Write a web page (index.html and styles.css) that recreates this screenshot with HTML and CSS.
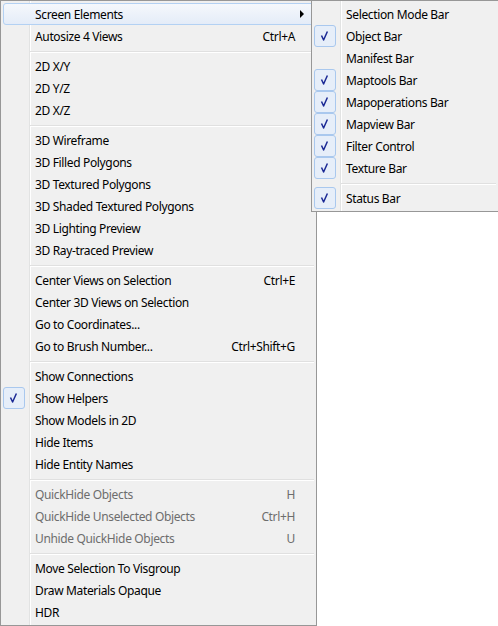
FILE: index.html
```html
<!DOCTYPE html>
<html lang="en">
<head>
    <meta charset="UTF-8">
    <meta name="viewport" content="width=device-width, initial-scale=1.0">
    <title>View Menu</title>
    <link rel="stylesheet" href="styles.css">
</head>
<body>
    <div class="menus">
        <ul class="menu main">
            <li class="item hot"><span class="mark"></span><span class="label">Screen Elements</span><span class="arrow"></span></li>
            <li class="item"><span class="mark"></span><span class="label">Autosize 4 Views</span><span class="key">Ctrl+A</span></li>
            <li class="sep"></li>
            <li class="item"><span class="mark"></span><span class="label">2D X/Y</span></li>
            <li class="item"><span class="mark"></span><span class="label">2D Y/Z</span></li>
            <li class="item"><span class="mark"></span><span class="label">2D X/Z</span></li>
            <li class="sep"></li>
            <li class="item"><span class="mark"></span><span class="label">3D Wireframe</span></li>
            <li class="item"><span class="mark"></span><span class="label">3D Filled Polygons</span></li>
            <li class="item"><span class="mark"></span><span class="label">3D Textured Polygons</span></li>
            <li class="item"><span class="mark"></span><span class="label">3D Shaded Textured Polygons</span></li>
            <li class="item"><span class="mark"></span><span class="label">3D Lighting Preview</span></li>
            <li class="item"><span class="mark"></span><span class="label">3D Ray-traced Preview</span></li>
            <li class="sep"></li>
            <li class="item"><span class="mark"></span><span class="label">Center Views on Selection</span><span class="key">Ctrl+E</span></li>
            <li class="item"><span class="mark"></span><span class="label">Center 3D Views on Selection</span></li>
            <li class="item"><span class="mark"></span><span class="label">Go to Coordinates...</span></li>
            <li class="item"><span class="mark"></span><span class="label">Go to Brush Number...</span><span class="key">Ctrl+Shift+G</span></li>
            <li class="sep"></li>
            <li class="item"><span class="mark"></span><span class="label">Show Connections</span></li>
            <li class="item"><span class="mark on"><svg viewBox="0 0 20 20"><path d="M6.5 9.5 L8.6 14 L12.4 5.5"/></svg></span><span class="label">Show Helpers</span></li>
            <li class="item"><span class="mark"></span><span class="label">Show Models in 2D</span></li>
            <li class="item"><span class="mark"></span><span class="label">Hide Items</span></li>
            <li class="item"><span class="mark"></span><span class="label">Hide Entity Names</span></li>
            <li class="sep"></li>
            <li class="item off"><span class="mark"></span><span class="label">QuickHide Objects</span><span class="key">H</span></li>
            <li class="item off"><span class="mark"></span><span class="label">QuickHide Unselected Objects</span><span class="key">Ctrl+H</span></li>
            <li class="item off"><span class="mark"></span><span class="label">Unhide QuickHide Objects</span><span class="key">U</span></li>
            <li class="sep"></li>
            <li class="item"><span class="mark"></span><span class="label">Move Selection To Visgroup</span></li>
            <li class="item"><span class="mark"></span><span class="label">Draw Materials Opaque</span></li>
            <li class="item"><span class="mark"></span><span class="label">HDR</span></li>
        </ul>

        <ul class="menu sub">
            <li class="item"><span class="mark"></span><span class="label">Selection Mode Bar</span></li>
            <li class="item"><span class="mark on"><svg viewBox="0 0 20 20"><path d="M6.5 9.5 L8.6 14 L12.4 5.5"/></svg></span><span class="label">Object Bar</span></li>
            <li class="item"><span class="mark"></span><span class="label">Manifest Bar</span></li>
            <li class="item"><span class="mark on"><svg viewBox="0 0 20 20"><path d="M6.5 9.5 L8.6 14 L12.4 5.5"/></svg></span><span class="label">Maptools Bar</span></li>
            <li class="item"><span class="mark on"><svg viewBox="0 0 20 20"><path d="M6.5 9.5 L8.6 14 L12.4 5.5"/></svg></span><span class="label">Mapoperations Bar</span></li>
            <li class="item"><span class="mark on"><svg viewBox="0 0 20 20"><path d="M6.5 9.5 L8.6 14 L12.4 5.5"/></svg></span><span class="label">Mapview Bar</span></li>
            <li class="item"><span class="mark on"><svg viewBox="0 0 20 20"><path d="M6.5 9.5 L8.6 14 L12.4 5.5"/></svg></span><span class="label">Filter Control</span></li>
            <li class="item"><span class="mark on"><svg viewBox="0 0 20 20"><path d="M6.5 9.5 L8.6 14 L12.4 5.5"/></svg></span><span class="label">Texture Bar</span></li>
            <li class="sep"></li>
            <li class="item"><span class="mark on"><svg viewBox="0 0 20 20"><path d="M6.5 9.5 L8.6 14 L12.4 5.5"/></svg></span><span class="label">Status Bar</span></li>
        </ul>
    </div>
</body>
</html>
```

FILE: styles.css
```css
html, body {
    margin: 0;
    height: 100%;
    overflow: hidden;
    background-color: #fff;
}

.menus {
    position: relative;
    font-family: "Noto Sans", "Open Sans", sans-serif;
    font-size: 12px;
    letter-spacing: -0.35px;
    color: #000;
}

.menu {
    list-style: none;
    margin: 0;
    padding: 2px;
    box-sizing: border-box;
    border: 1px solid #979797;
    background-color: #f0f0f0;
    /* gutter line next to the check column */
    background-image: linear-gradient(to right, transparent 28px, #e2e3e3 28px, #e2e3e3 29px, #fff 29px, #fff 30px, transparent 30px);
    background-repeat: no-repeat;
}

.main {
    width: 317px;
    height: 626px;
}

/* submenu flyout sits over the right edge of the main menu */
.sub {
    position: absolute;
    top: 0;
    left: 311px;
    width: 188px;
}

.item {
    display: flex;
    align-items: center;
    height: 22px;
    padding-right: 9px;
    box-sizing: border-box;
    border: 1px solid transparent;
    border-radius: 3px;
    white-space: nowrap;
}

.item.hot {
    border-color: #b3d1f3;
    background: linear-gradient(#f5f8fc, #e4ecf8);
}

.mark {
    flex: none;
    width: 22px;
    height: 22px;
    margin: -1px 0 -1px -1px;
    box-sizing: border-box;
}

.mark.on {
    border: 1px solid #a9c8ee;
    border-radius: 3px;
    background: #e6eef9;
}

.mark svg {
    display: block;
    width: 20px;
    height: 20px;
}

.mark path {
    fill: none;
    stroke: #1a2894;
    stroke-width: 1.5;
    stroke-linejoin: round;
}

.label {
    flex: 1;
    margin-left: 10px;
}

.key {
    margin-right: 9px;
}

.arrow {
    width: 0;
    height: 0;
    border-left: 4px solid #000;
    border-top: 4px solid transparent;
    border-bottom: 4px solid transparent;
}

.item.off {
    color: #6d6d6d;
}

.sep {
    height: 8px;
    padding-top: 4px;
    box-sizing: border-box;
}

.sep::after {
    content: "";
    display: block;
    margin-left: 27px;
    border-top: 1px solid #e0e0e0;
    border-bottom: 1px solid #fff;
}
```
